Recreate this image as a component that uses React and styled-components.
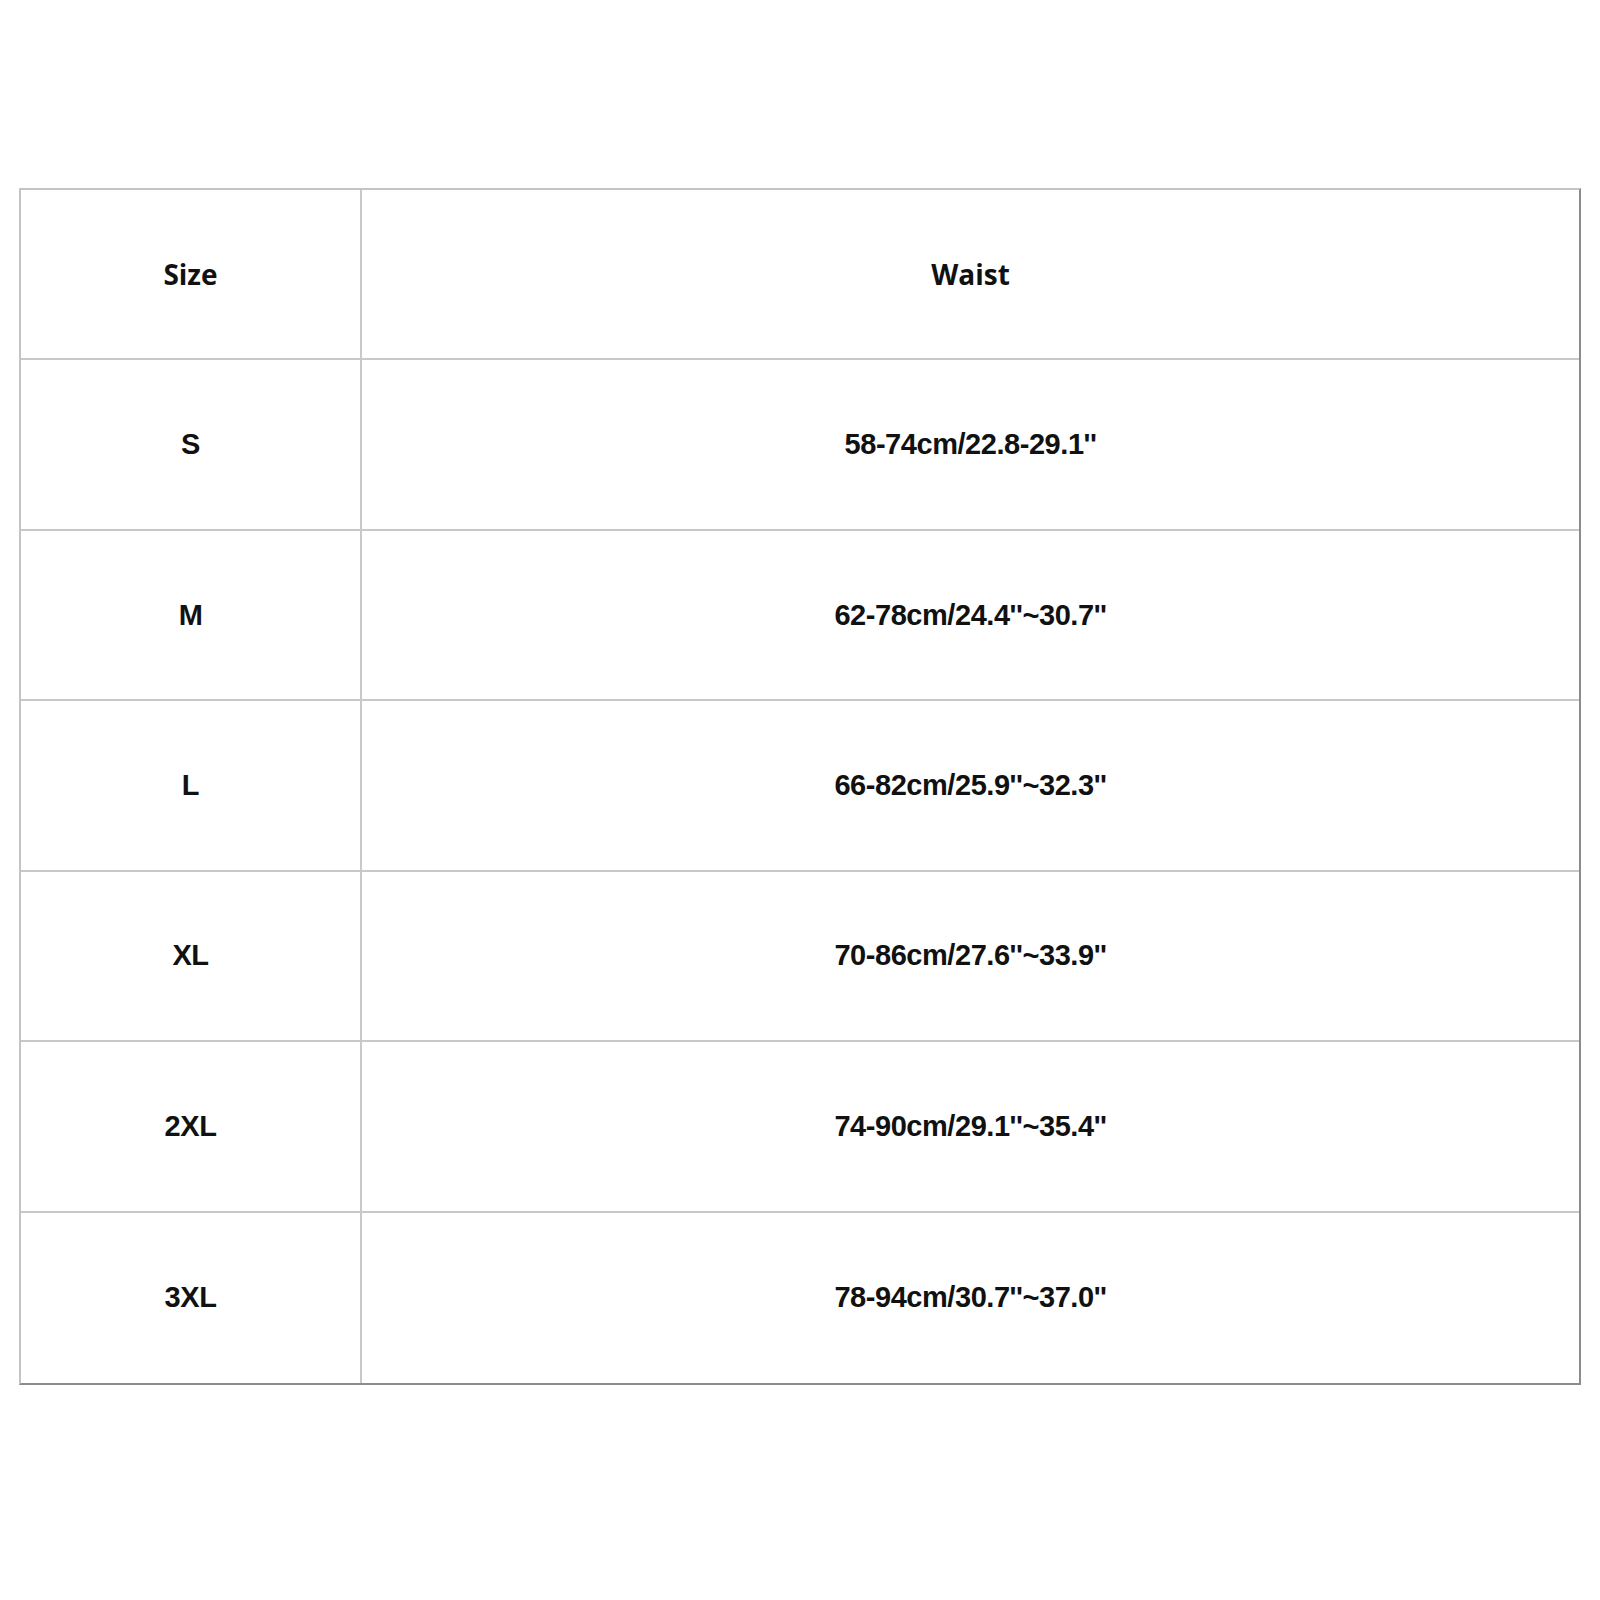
import React from 'react';
import styled, { createGlobalStyle } from 'styled-components';

const GlobalStyle = createGlobalStyle`
  html, body {
    margin: 0;
    padding: 0;
    background: #ffffff;
  }
`;

const Page = styled.div`
  padding: 188px 0 0 19px;
  background: #fff;
`;

const Table = styled.div`
  width: 1562px;
  height: 1197px;
  display: grid;
  grid-template-columns: 341px 1fr;
  grid-template-rows: repeat(7, 1fr);
  box-sizing: border-box;
  border-top: 2px solid #c4c4c4;
  border-left: 2px solid #c4c4c4;
  border-right: 2px solid #8c8c8c;
  border-bottom: 2px solid #8c8c8c;
`;

const Cell = styled.div`
  display: flex;
  align-items: center;
  justify-content: center;
  color: #111;
  border-right: ${p => (p.$last ? 'none' : '2px solid #c8c8c8')};
  border-bottom: ${p => (p.$bottom ? 'none' : '2px solid #c8c8c8')};
  font-family: ${p => (p.$head ? '"Open Sans", "Noto Sans", sans-serif' : '"Liberation Sans", Arial, sans-serif')};
  font-weight: 700;
  font-size: ${p => (p.$head ? '28px' : '29px')};
  letter-spacing: ${p => (p.$head ? '0' : '-0.45px')};
`;

const rows = [
  ['S', "58-74cm/22.8-29.1''"],
  ['M', "62-78cm/24.4''~30.7''"],
  ['L', "66-82cm/25.9''~32.3''"],
  ['XL', "70-86cm/27.6''~33.9''"],
  ['2XL', "74-90cm/29.1''~35.4''"],
  ['3XL', "78-94cm/30.7''~37.0''"],
];

export default function App() {
  return (
    <>
      <GlobalStyle />
      <Page>
        <Table>
          <Cell $head>Size</Cell>
          <Cell $head $last>Waist</Cell>
          {rows.map(([size, waist], i) => (
            <React.Fragment key={size}>
              <Cell $bottom={i === rows.length - 1}>{size}</Cell>
              <Cell $last $bottom={i === rows.length - 1}>{waist}</Cell>
            </React.Fragment>
          ))}
        </Table>
      </Page>
    </>
  );
}
